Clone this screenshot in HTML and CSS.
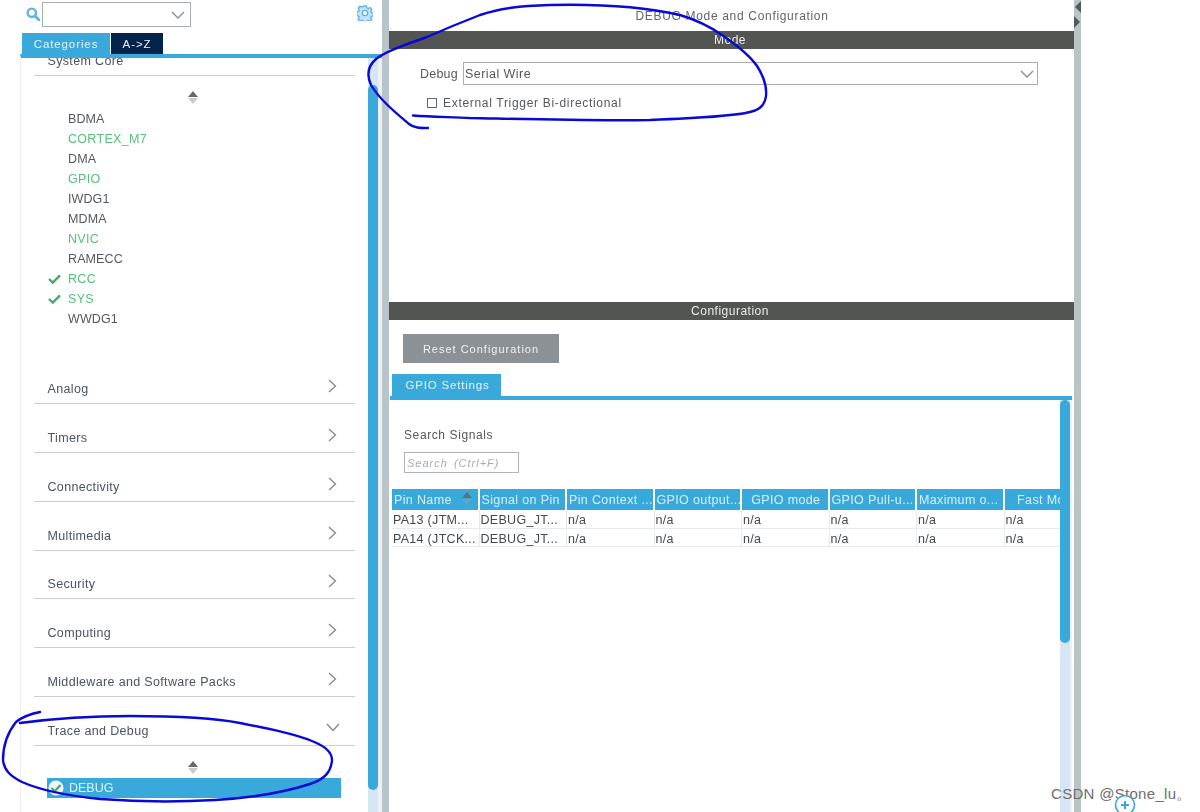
FILE: index.html
```html
<!DOCTYPE html>
<html lang="en">
<head>
<meta charset="utf-8">
<title>DEBUG Mode and Configuration</title>
<link rel="stylesheet" href="styles.css">
</head>
<body>
<div class="app">
  <aside class="side">
    <div class="side-top">
      <svg class="search-ico" width="14" height="14" viewBox="0 0 14 14"><circle cx="5.8" cy="5.8" r="4.2" fill="none" stroke="#5db4e6" stroke-width="2.400"/><path d="M9 9l3.800 3.800" stroke="#5db4e6" stroke-width="2.800" stroke-linecap="round"/></svg>
      <div class="combo">
        <svg class="chev" width="14" height="8" viewBox="0 0 14 8"><path d="M1 1l6 6 6-6" fill="none" stroke="#8a9094" stroke-width="1.400"/></svg>
      </div>
      <svg class="gear" width="16" height="16" viewBox="0 0 16 16"><path d="M6.600.8h2.800l.4 2 1.500.7 1.800-1 1.800 2-1.100 1.700.5 1.500 2 .5v2.600l-2 .5-.5 1.500 1.100 1.700-1.800 1.900-1.800-1-1.500.7-.4 1.600H6.600l-.4-1.700-1.500-.7-1.800 1-1.800-1.900 1.100-1.700-.5-1.500-1.900-.5V6.700l2-.5.5-1.500-1.100-1.700 1.800-2 1.800 1 1.500-.7z" fill="#bfe2f6" stroke="#5fb2e2" stroke-width="1.300"/><circle cx="8" cy="8" r="2.600" fill="#fff" stroke="#5fb2e2" stroke-width="1.400"/></svg>
    </div>
    <div class="tabs">
      <div class="tab tab-on">Categories</div>
      <div class="tab tab-dark">A-&gt;Z</div>
    </div>
    <div class="side-body">
      <div class="cat-scroll">
        <div class="cat cat-clipped"><span>System Core</span></div>
        <div class="sorter"><i class="up"></i><i class="down"></i></div>
        <ul class="items">
          <li>BDMA</li>
          <li class="ok">CORTEX_M7</li>
          <li>DMA</li>
          <li class="ok">GPIO</li>
          <li>IWDG1</li>
          <li>MDMA</li>
          <li class="ok">NVIC</li>
          <li>RAMECC</li>
          <li class="ok"><svg class="tick" width="13" height="10" viewBox="0 0 13 10"><path d="M1 5l3.800 3.600L12 1.400" fill="none" stroke="#43a96f" stroke-width="2.400"/></svg>RCC</li>
          <li class="ok"><svg class="tick" width="13" height="10" viewBox="0 0 13 10"><path d="M1 5l3.800 3.600L12 1.400" fill="none" stroke="#43a96f" stroke-width="2.400"/></svg>SYS</li>
          <li>WWDG1</li>
        </ul>
        <div class="cat"><span>Analog</span><svg class="arrow" width="9" height="14" viewBox="0 0 9 14"><path d="M1 1l6.500 6L1 13" fill="none" stroke="#85898c" stroke-width="1.300"/></svg></div>
        <div class="cat"><span>Timers</span><svg class="arrow" width="9" height="14" viewBox="0 0 9 14"><path d="M1 1l6.500 6L1 13" fill="none" stroke="#85898c" stroke-width="1.300"/></svg></div>
        <div class="cat"><span>Connectivity</span><svg class="arrow" width="9" height="14" viewBox="0 0 9 14"><path d="M1 1l6.500 6L1 13" fill="none" stroke="#85898c" stroke-width="1.300"/></svg></div>
        <div class="cat"><span>Multimedia</span><svg class="arrow" width="9" height="14" viewBox="0 0 9 14"><path d="M1 1l6.500 6L1 13" fill="none" stroke="#85898c" stroke-width="1.300"/></svg></div>
        <div class="cat"><span>Security</span><svg class="arrow" width="9" height="14" viewBox="0 0 9 14"><path d="M1 1l6.500 6L1 13" fill="none" stroke="#85898c" stroke-width="1.300"/></svg></div>
        <div class="cat"><span>Computing</span><svg class="arrow" width="9" height="14" viewBox="0 0 9 14"><path d="M1 1l6.500 6L1 13" fill="none" stroke="#85898c" stroke-width="1.300"/></svg></div>
        <div class="cat"><span>Middleware and Software Packs</span><svg class="arrow" width="9" height="14" viewBox="0 0 9 14"><path d="M1 1l6.500 6L1 13" fill="none" stroke="#85898c" stroke-width="1.300"/></svg></div>
        <div class="cat"><span>Trace and Debug</span><svg class="arrow-down" width="14" height="9" viewBox="0 0 14 9"><path d="M1 1l6 6.500L13 1" fill="none" stroke="#85898c" stroke-width="1.300"/></svg></div>
        <div class="sorter sorter-low"><i class="up"></i><i class="down"></i></div>
        <div class="selected"><svg class="badge" width="16" height="16" viewBox="0 0 16 16"><circle cx="8" cy="8" r="7.500" fill="#f2f6f8"/><path d="M3.500 8l3.200 3.200L12.500 5" fill="none" stroke="#43a96f" stroke-width="2.200"/></svg>DEBUG</div>
      </div>
      <div class="vbar"><div class="vthumb"></div></div>
    </div>
  </aside>
  <div class="splitter"></div>
  <main class="main">
    <section class="mode">
      <div class="title">DEBUG Mode and Configuration</div>
      <div class="bar">Mode</div>
      <div class="debug-row">
        <span class="debug-label">Debug</span>
        <div class="debug-select"><span>Serial Wire</span><svg width="14" height="8" viewBox="0 0 14 8"><path d="M1 1l6 6 6-6" fill="none" stroke="#8a9094" stroke-width="1.400"/></svg></div>
      </div>
      <label class="check-row"><span class="box"></span>External Trigger Bi-directional</label>
    </section>
    <section class="config">
      <div class="bar">Configuration</div>
      <div class="reset">Reset Configuration</div>
      <div class="gpio-tab">GPIO Settings</div>
      <div class="gpio-body">
        <div class="gpio-content">
          <div class="search-label">Search Signals</div>
          <div class="search-box">Search (Ctrl+F)</div>
          <div class="table">
            <div class="th"><span>Pin Name</span><span class="sort-mini"><i class="up"></i><i class="down"></i></span></div>
            <div class="th"><span>Signal on Pin</span></div>
            <div class="th"><span>Pin Context ...</span></div>
            <div class="th"><span>GPIO output...</span></div>
            <div class="th th-c"><span>GPIO mode</span></div>
            <div class="th"><span>GPIO Pull-u...</span></div>
            <div class="th"><span>Maximum o...</span></div>
            <div class="th th-c"><span>Fast Mode</span></div>
            <div class="td">PA13 (JTM...</div><div class="td">DEBUG_JT...</div><div class="td">n/a</div><div class="td">n/a</div><div class="td">n/a</div><div class="td">n/a</div><div class="td">n/a</div><div class="td">n/a</div>
            <div class="td">PA14 (JTCK...</div><div class="td">DEBUG_JT...</div><div class="td">n/a</div><div class="td">n/a</div><div class="td">n/a</div><div class="td">n/a</div><div class="td">n/a</div><div class="td">n/a</div>
          </div>
        </div>
        <div class="vbar vbar-main"><div class="vthumb"></div></div>
      </div>
    </section>
  </main>
  <div class="splitter splitter-right">
    <i class="tri-l"></i><i class="tri-r"></i>
  </div>
</div>
<svg class="ink" width="1200" height="812" viewBox="0 0 1200 812">
  <path d="M428 128C420 128 414 128 409 124C396 113 380 100 371 85C366 74 368 66 376 59C386 51 405 45 427 37C445 29 462 22 480 15C500 8 520 6 550 5C590 4 640 6 680 15C700 21 712 28 722 35C738 46 750 56 757 66C764 77 767 86 766 96C765 105 760 110 750 112C735 116 700 118 650 120C590 121 520 119 470 118C450 117 430 117 413 115.500"/>
  <path d="M40 712C30 714 22 717 16 722C8 732 3 745 3 760C4 770 10 776 22 782C40 790 70 796 100 799C140 802 180 802 215 800C250 798 285 792 310 784C325 779 331 772 332 760C332 752 325 746 312 741C295 734 270 729 240 723C215 718 180 716 130 716C90 716 50 719 20 723"/>
</svg>
<div class="watermark">CSDN @Stone_lu。</div>
<svg class="plus" width="22" height="22" viewBox="0 0 22 22"><circle cx="11" cy="11" r="9.500" fill="#fff" stroke="#3aa8dc" stroke-width="1.600"/><path d="M11 7v8M7 11h8" stroke="#3aa8dc" stroke-width="2"/></svg>
</body>
</html>
```
FILE: styles.css
```css
* { box-sizing: border-box; }
html, body { margin: 0; height: 812px; overflow: hidden; background: #fff; }
body { font-family: "Liberation Sans", Arial, sans-serif; font-size: 12.500px; color: #55585c; position: relative; }
.app { display: flex; height: 812px; width: 1081px; filter: blur(.35px); }
.side { width: 382px; display: flex; flex-direction: column; }
.side-top { height: 33px; display: flex; align-items: flex-start; padding: 2px 9px 0 26px; }
.search-ico { margin-top: 5px; }
.combo { width: 149px; height: 25px; margin-left: 2px; border: 1.500px solid #a9adb0; display: flex; align-items: center; justify-content: flex-end; padding-right: 5px; }
.gear { margin: 3px 0 0 auto; }
.tabs { display: flex; height: 21px; padding-left: 22px; gap: 1px; }
.tab { font-size: 11.500px; letter-spacing: .9px; color: #e8f3fa; display: flex; align-items: center; justify-content: center; }
.tab-on { width: 88px; background: #39a9dc; }
.tab-dark { width: 52px; background: #03234b; }
.side-body { flex: 1; min-height: 0; margin-left: 20px; border-top: 4px solid #39a9dc; border-left: 1px solid #eceff1; display: flex; overflow: hidden; }
.cat-scroll { flex: 1; min-width: 0; padding: 0 13px; overflow: hidden; }
.vbar { width: 14px; border-right: 4px solid #eef1f4; background: #d6e6f4; flex: none; }
.vthumb { margin-top: 27px; height: 705px; background: #39a9dc; border-radius: 5px; }
.cat { height: 48.750px; border-bottom: 1.500px solid #c9ced3; display: flex; justify-content: space-between; align-items: flex-end; color: #4c5268; padding: 0 18px 7px 13.500px; letter-spacing: .34px; }
.cat-clipped { height: 18px; padding-bottom: 7.500px; }
.cat-clipped span { line-height: 14px; }
.arrow { margin-bottom: 3px; }
.arrow-down { margin-bottom: 6px; margin-right: -3px; }
.sorter { height: 14px; width: 10px; margin: 15px 0 0 154px; display: flex; flex-direction: column; gap: 1px; }
.sorter-low { margin-top: 15px; }
.up, .down { display: block; width: 0; height: 0; border-left: 5px solid transparent; border-right: 5px solid transparent; }
.up { border-bottom: 6px solid #66696c; }
.down { border-top: 6px solid #c9cbcd; }
.items { list-style: none; margin: 4px 0 0; padding: 0 0 0 34px; height: 246.500px; }
.items li { height: 20px; line-height: 20px; font-size: 12.500px; letter-spacing: .1px; color: #55585c; position: relative; }
.items li.ok { color: #56c07c; letter-spacing: .3px; }
.tick { position: absolute; left: -20px; top: 5px; }
.selected { height: 20px; margin: 3px 0 0 13px; width: 294px; background: #39a9dc; color: #e6f3fa; display: flex; align-items: center; gap: 5px; padding-left: 1px; font-size: 12.500px; }
.splitter { width: 7px; flex: none; background: #b9c4ca; }
.splitter-right { display: flex; flex-direction: column; gap: 3px; padding-top: 1px; align-items: flex-end; height: 812px; }
.tri-l, .tri-r { display: block; width: 0; height: 0; border-top: 6px solid transparent; border-bottom: 6px solid transparent; }
.tri-l { border-right: 6px solid #55585a; }
.tri-r { border-left: 6px solid #55585a; align-self: flex-start; }
.main { flex: 1; min-width: 0; display: flex; flex-direction: column; }
.mode { height: 294px; flex: none; }
.title { height: 31px; padding-top: 8.500px; text-align: center; font-size: 12px; letter-spacing: .68px; color: #62666a; padding-left: 1px; }
.bar { height: 18px; background: #535553; color: #e8ecea; text-align: center; line-height: 19px; font-size: 12px; letter-spacing: .5px; padding-right: 3px; }
.debug-row { display: flex; align-items: center; margin: 13px 0 0 31px; height: 23px; }
.debug-label { width: 43px; letter-spacing: .2px; }
.debug-select { width: 575px; height: 23px; border: 1.500px solid #a9adb0; display: flex; justify-content: space-between; align-items: center; padding: 0 3px 0 1px; letter-spacing: .45px; }
.check-row { display: flex; align-items: center; margin: 7px 0 0 38px; height: 22px; letter-spacing: .69px; font-size: 12px; }
.box { width: 10px; height: 10px; border: 1px solid #66696c; margin-right: 6px; }
.config { flex: 1; min-height: 0; margin-top: 8px; display: flex; flex-direction: column; }
.reset { width: 156px; height: 29px; margin: 14px 0 0 14px; background: #8c9196; color: #f0f2f3; font-size: 11px; letter-spacing: 1px; display: flex; align-items: center; justify-content: center; }
.gpio-tab { width: 109px; height: 22px; margin: 11px 0 0 3px; background: #39a9dc; color: #e6f3fa; font-size: 11.500px; letter-spacing: .8px; display: flex; align-items: center; justify-content: center; padding-left: 2px; }
.gpio-body { flex: 1; min-height: 0; margin: 0 2px 0 1px; border-top: 4px solid #39a9dc; display: flex; }
.gpio-content { flex: 1; min-width: 0; overflow: hidden; padding: 26px 0 0 2px; }
.vbar-main { width: 12px; border-right-width: 2px; }
.vbar-main .vthumb { margin-top: 0; height: 243px; }
.search-label { margin-left: 12px; line-height: 18px; letter-spacing: .6px; font-size: 12px; }
.search-box { width: 115px; height: 21px; margin: 8px 0 0 12px; border: 1.500px solid #b0b4b7; padding-left: 2px; line-height: 20px; font-size: 11px; font-style: italic; color: #a9adb0; letter-spacing: 1px; word-spacing: 2px; white-space: nowrap; overflow: hidden; }
.table { display: grid; grid-template-columns: repeat(8, 87.500px); grid-template-rows: 21px 18.500px 18.500px; margin-top: 16px; }
.th { background: #39a9dc; color: #d9eef9; border-right: 2px solid #fff; padding-left: 2px; line-height: 23px; position: relative; white-space: nowrap; overflow: hidden; letter-spacing: .36px; }
.th-c { text-align: center; }
.sort-mini { position: absolute; right: 6px; top: 3px; display: flex; flex-direction: column; gap: 1px; }
.sort-mini .up { border-bottom-color: #5c6f7d; }
.sort-mini .down { border-top-color: #6ba3c5; }
.td { border-right: 1.500px solid #e8ebee; border-bottom: 1.500px solid #e8ebee; line-height: 21px; padding-left: 1px; color: #45484c; white-space: nowrap; overflow: hidden; letter-spacing: .3px; }
.ink { position: absolute; left: 0; top: 0; pointer-events: none; }
.ink path { fill: none; stroke: #0808d8; stroke-width: 2.400; stroke-linecap: round; }
.watermark { position: absolute; left: 1051px; top: 785px; font-size: 15px; color: #6e6e6e; letter-spacing: .3px; white-space: nowrap; }
.plus { position: absolute; left: 1114px; top: 794px; }
```
